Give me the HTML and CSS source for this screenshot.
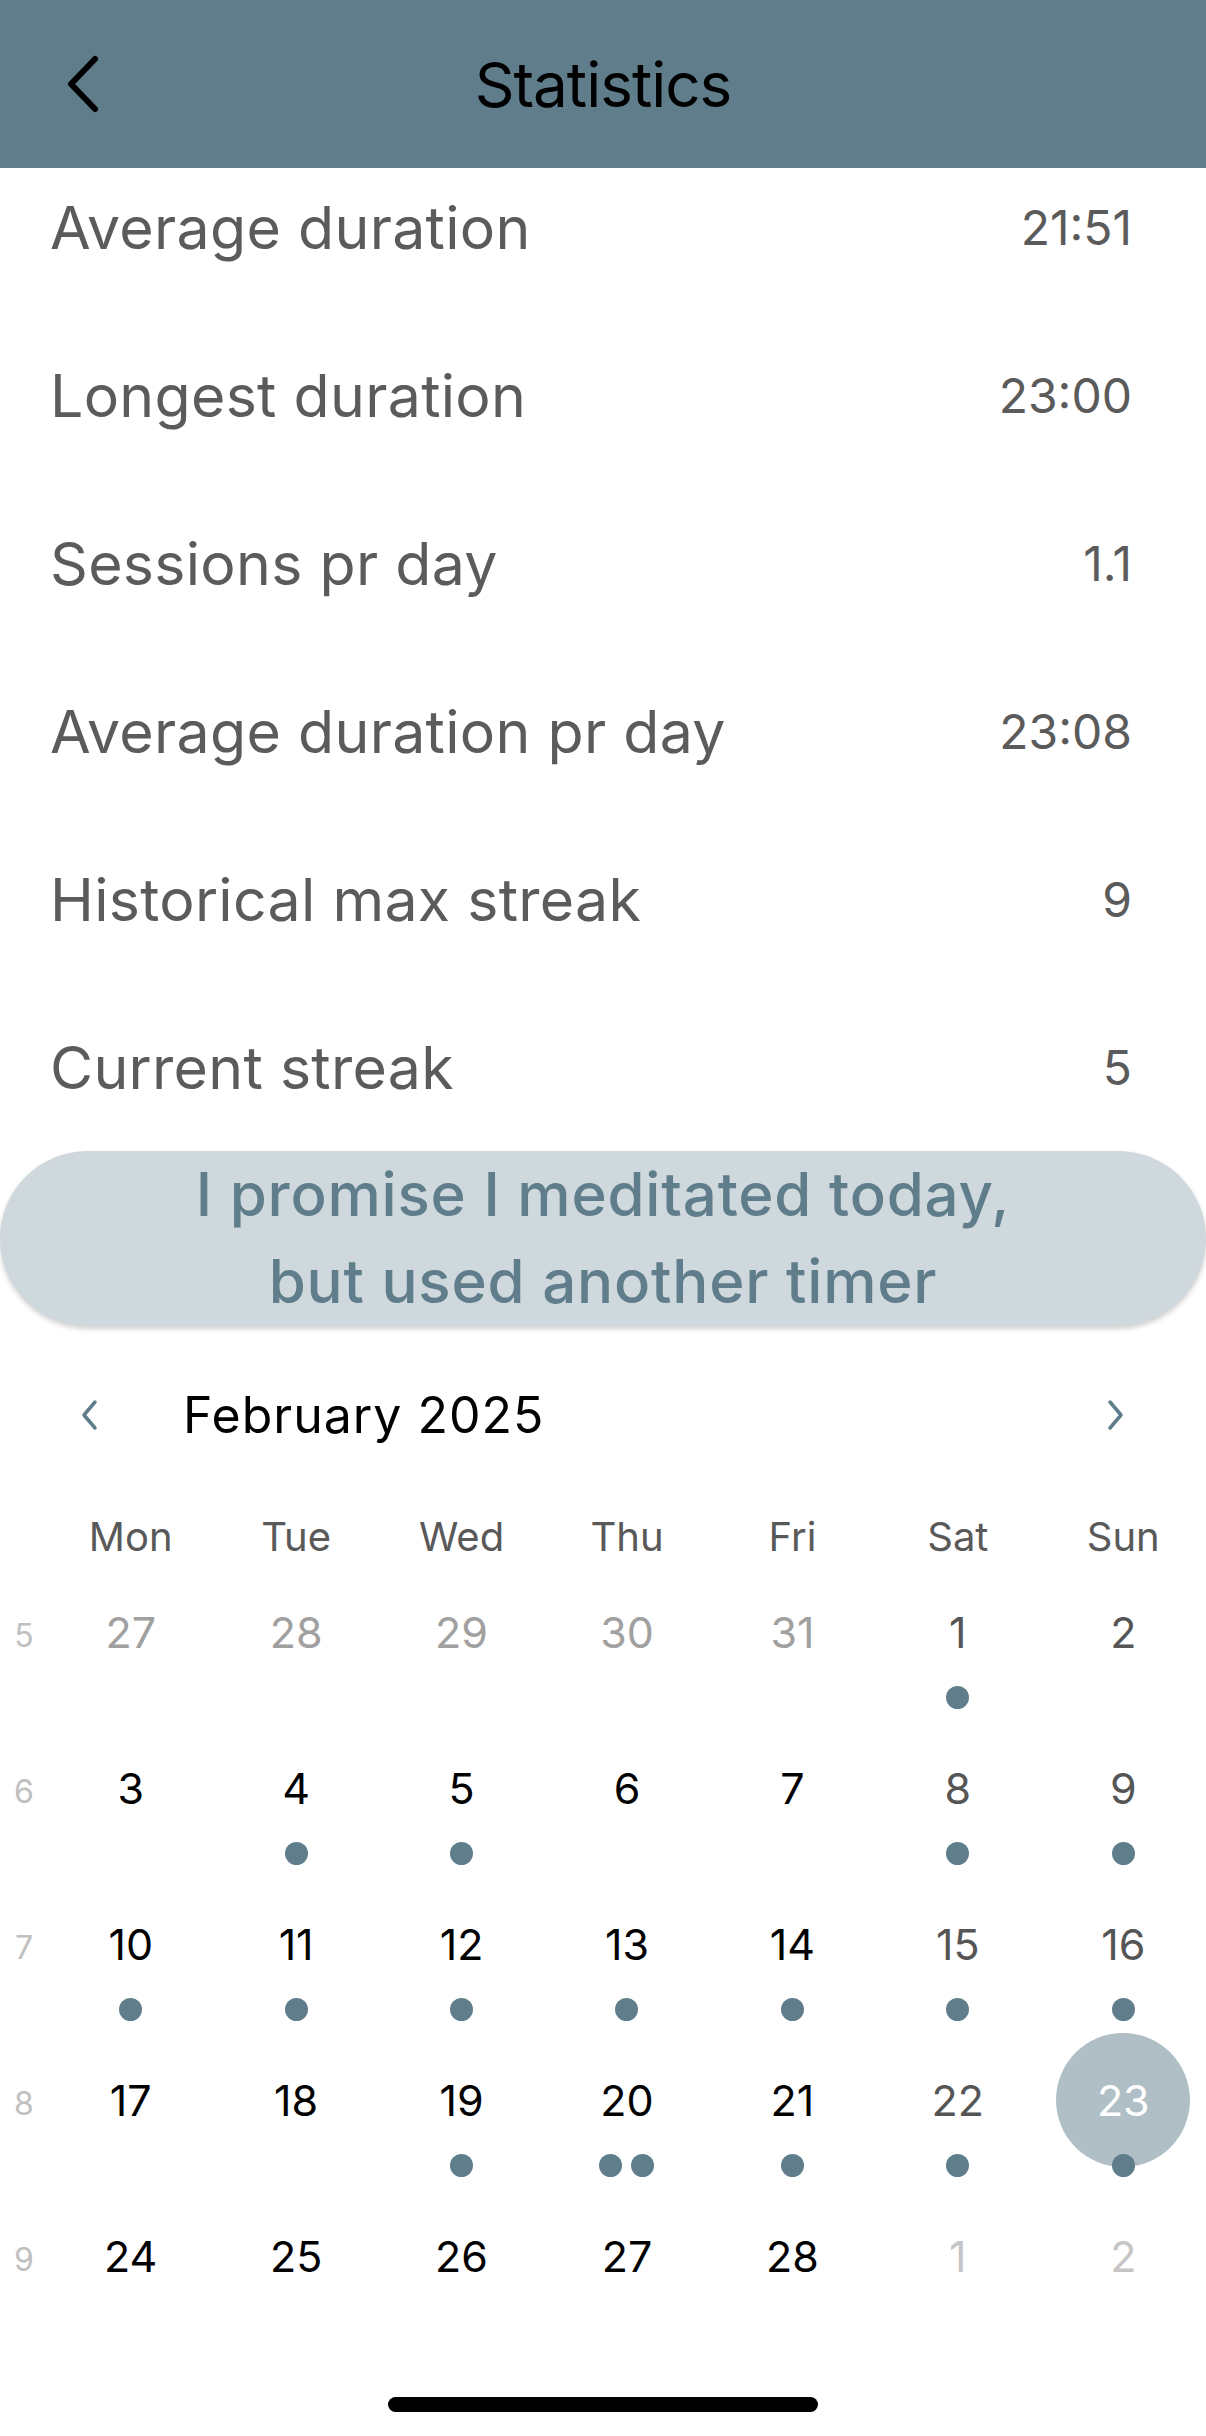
FILE: index.html
```html
<!DOCTYPE html>
<html>
<head>
  <title>Statistics</title>
  <link rel="stylesheet" href="styles.css">
</head>
<body>
  <div class="screen">
    <header class="app-bar">
      <button class="back-btn" aria-label="Back">
        <svg width="40" height="60" viewBox="0 0 40 60">
          <path d="M34 5 L10 30 L34 55" fill="none" stroke="#000" stroke-width="6" stroke-linecap="round" stroke-linejoin="round"/>
        </svg>
      </button>
      <h1 class="app-title">Statistics</h1>
    </header>

    <main class="content">
      <ul class="stats">
        <li class="stat"><span class="stat-label">Average duration</span><span class="stat-value">21:51</span></li>
        <li class="stat"><span class="stat-label">Longest duration</span><span class="stat-value">23:00</span></li>
        <li class="stat"><span class="stat-label">Sessions pr day</span><span class="stat-value">1.1</span></li>
        <li class="stat"><span class="stat-label">Average duration pr day</span><span class="stat-value">23:08</span></li>
        <li class="stat"><span class="stat-label">Historical max streak</span><span class="stat-value">9</span></li>
        <li class="stat"><span class="stat-label">Current streak</span><span class="stat-value">5</span></li>
      </ul>

      <button class="promise-btn">I promise I meditated today,<br>but used another timer</button>

      <section class="calendar">
        <div class="cal-head">
          <button class="cal-nav cal-prev" aria-label="Previous month">
            <svg width="24" height="32" viewBox="0 0 24 32">
              <path d="M17 3 L6 16 L17 29" fill="none" stroke="#607d8b" stroke-width="3.5" stroke-linecap="round" stroke-linejoin="round"/>
            </svg>
          </button>
          <div class="cal-title">February 2025</div>
          <button class="cal-nav cal-next" aria-label="Next month">
            <svg width="24" height="32" viewBox="0 0 24 32">
              <path d="M7 3 L18 16 L7 29" fill="none" stroke="#607d8b" stroke-width="3.5" stroke-linecap="round" stroke-linejoin="round"/>
            </svg>
          </button>
        </div>

        <div class="cal-grid" id="cal-grid">
          <div class="dow-spacer"></div>
          <div class="dow">Mon</div>
          <div class="dow">Tue</div>
          <div class="dow">Wed</div>
          <div class="dow">Thu</div>
          <div class="dow">Fri</div>
          <div class="dow">Sat</div>
          <div class="dow">Sun</div>
          <!-- day cells are generated below -->
        </div>
      </section>
    </main>

    <div class="home-bar"></div>
  </div>

  <script>
// number of sessions per day in February
var sessions = {
  1: 1, 4: 1, 5: 1, 8: 1, 9: 1,
  10: 1, 11: 1, 12: 1, 13: 1, 14: 1, 15: 1, 16: 1,
  19: 1, 20: 2, 21: 1, 22: 1, 23: 1
};
var selectedDay = 23;

var grid = document.getElementById("cal-grid");

for (var i = 0; i < 35; i++) {
  var date = new Date(2025, 0, 27 + i);
  var dayNo = date.getDate();
  var inMonth = date.getMonth() === 1;
  var weekend = i % 7 >= 5;

  if (i % 7 === 0) {
    var week = document.createElement("div");
    week.className = "week-no";
    week.textContent = 5 + i / 7;
    grid.appendChild(week);
  }

  var cell = document.createElement("div");
  cell.className = "day";
  if (weekend) cell.classList.add("weekend");
  if (!inMonth) cell.classList.add("outside");
  if (inMonth && dayNo === selectedDay) cell.classList.add("selected");

  var num = document.createElement("span");
  num.className = "day-num";
  num.textContent = dayNo;
  cell.appendChild(num);

  var count = inMonth ? (sessions[dayNo] || 0) : 0;
  if (count > 0) {
    var markers = document.createElement("span");
    markers.className = "markers";
    for (var m = 0; m < count; m++) {
      var dot = document.createElement("i");
      dot.className = "dot";
      markers.appendChild(dot);
    }
    cell.appendChild(markers);
  }

  grid.appendChild(cell);
}
  </script>
</body>
</html>
```

FILE: styles.css
```css
:root {
  --primary-color: #607d8b;
  --primary-light: #cfd8dc;
  --selected-color: #b0bec5;
  --text-grey: #5b5b5b;
}

* {
  box-sizing: border-box;
}

body {
  margin: 0;
  padding: 0;
  background-color: #fff;
  font-family: Inter, "Noto Sans", sans-serif;
}

.screen {
  width: 1206px;
  height: 2436px;
  overflow: hidden;
  display: flex;
  flex-direction: column;
}

/* app bar */
.app-bar {
  height: 168px;
  flex-shrink: 0;
  background-color: var(--primary-color);
  display: flex;
  align-items: center;
  position: relative;
  z-index: 1;
}

.back-btn {
  width: 40px;
  height: 60px;
  margin-left: 61px;
  padding: 0;
  border: none;
  background: none;
  display: flex;
}

.app-title {
  flex: 1;
  margin: 0 101px 0 0;
  text-align: center;
  font-size: 62px;
  font-weight: 400;
  letter-spacing: -1px;
  color: #000;
}

.content {
  flex: 1;
  overflow: hidden;
}

/* stats list */
.stats {
  list-style: none;
  margin: -25px 0 0 0;
  padding: 0;
}

.stat {
  height: 168px;
  display: flex;
  align-items: center;
  justify-content: space-between;
  padding: 0 74px 0 50px;
  color: var(--text-grey);
}

.stat-label {
  font-size: 59px;
  letter-spacing: 0.3px;
}

.stat-value {
  font-size: 48px;
}

/* manual session button */
.promise-btn {
  display: block;
  width: 100%;
  height: 175px;
  border: none;
  border-radius: 88px;
  background-color: var(--primary-light);
  box-shadow: 0 3px 5px rgba(0, 0, 0, 0.18);
  color: var(--primary-color);
  font-family: Inter, "Noto Sans", sans-serif;
  font-size: 60px;
  font-weight: 500;
  line-height: 87px;
  letter-spacing: 0.8px;
  padding: 0;
  padding-bottom: 6px;
}

/* calendar */
.cal-head {
  height: 106px;
  margin: 36px 0 50px;
  display: flex;
  align-items: center;
}

.cal-nav {
  width: 48px;
  height: 48px;
  padding: 0;
  border: none;
  background: none;
  display: flex;
  align-items: center;
  justify-content: center;
}

.cal-prev {
  margin-left: 66px;
}

.cal-next {
  margin-right: 67px;
}

.cal-title {
  flex: 1;
  margin-left: 69px;
  font-size: 50px;
  letter-spacing: 1px;
  color: #000;
}

.cal-grid {
  display: grid;
  grid-template-columns: 48px repeat(7, 1fr);
}

.dow {
  height: 36px;
  display: flex;
  align-items: center;
  justify-content: center;
  font-size: 40px;
  color: #595959;
}

.week-no {
  height: 156px;
  display: flex;
  align-items: center;
  justify-content: center;
  padding-top: 6px;
  font-size: 32px;
  color: #c0c0c0;
}

.day {
  position: relative;
  height: 156px;
  display: flex;
  align-items: center;
  justify-content: center;
}

.day-num {
  width: 134px;
  height: 134px;
  border-radius: 50%;
  display: flex;
  align-items: center;
  justify-content: center;
  font-size: 43px;
  color: #000;
}

.day.weekend .day-num {
  color: #555;
}

.day.outside .day-num {
  color: #a0a0a0;
}

.day.outside.weekend .day-num {
  color: #c6c6c6;
}

.day.selected .day-num {
  background-color: var(--selected-color);
  color: #fff;
}

.markers {
  position: absolute;
  left: 0;
  right: 0;
  bottom: 1px;
  display: flex;
  justify-content: center;
  gap: 9px;
}

.dot {
  width: 23px;
  height: 23px;
  border-radius: 50%;
  background-color: var(--primary-color);
}

/* iOS home indicator */
.home-bar {
  width: 430px;
  height: 15px;
  margin: 0 auto 24px;
  flex-shrink: 0;
  border-radius: 8px;
  background-color: #000;
}
```
